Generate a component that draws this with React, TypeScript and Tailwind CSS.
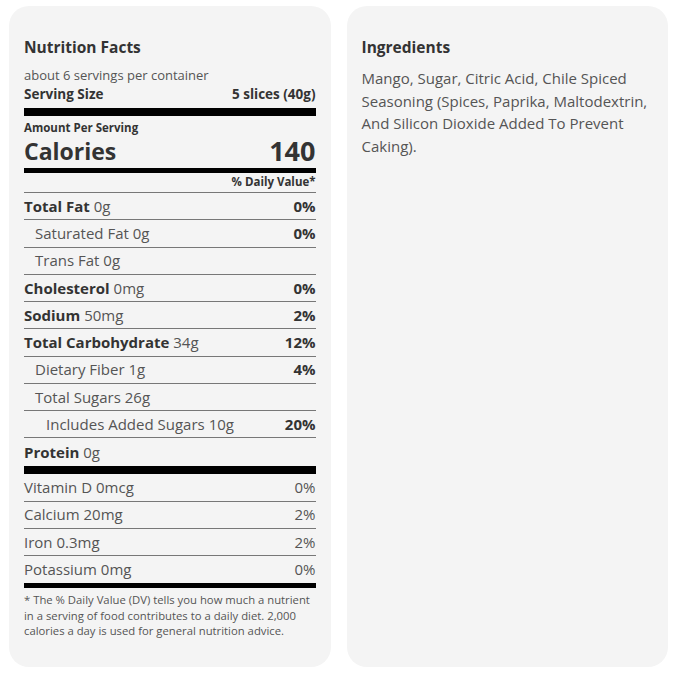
const rows = [
  { label: "Total Fat", value: "0g", dv: "0%", bold: true, indent: 0 },
  { label: "Saturated Fat", value: "0g", dv: "0%", bold: false, indent: 1 },
  { label: "Trans Fat", value: "0g", dv: "", bold: false, indent: 1 },
  { label: "Cholesterol", value: "0mg", dv: "0%", bold: true, indent: 0 },
  { label: "Sodium", value: "50mg", dv: "2%", bold: true, indent: 0 },
  { label: "Total Carbohydrate", value: "34g", dv: "12%", bold: true, indent: 0 },
  { label: "Dietary Fiber", value: "1g", dv: "4%", bold: false, indent: 1 },
  { label: "Total Sugars", value: "26g", dv: "", bold: false, indent: 1 },
  { label: "Includes Added Sugars", value: "10g", dv: "20%", bold: false, indent: 2 },
];

const vitamins = [
  { label: "Vitamin D", value: "0mcg", dv: "0%" },
  { label: "Calcium", value: "20mg", dv: "2%" },
  { label: "Iron", value: "0.3mg", dv: "2%" },
  { label: "Potassium", value: "0mg", dv: "0%" },
];

const indents = ["pl-0", "pl-[11px]", "pl-[22px]"];

export default function App() {
  return (
    <div
      className="flex gap-4 bg-white pl-[9px] pr-[11px] pt-[6px] pb-[7px] text-[#555]"
      style={{ fontFamily: '"Open Sans", "Liberation Sans", sans-serif' }}
    >
      {/* nutrition label */}
      <div className="w-[322px] rounded-[20px] bg-[#f4f4f4] px-[15px] pt-[31px] pb-[28px]">
        <h2 className="text-[15.5px] leading-[20px] font-bold text-[#333]">Nutrition Facts</h2>
        <p className="mt-[9px] text-[13px] leading-[19px]">about 6 servings per container</p>
        <div className="flex justify-between text-[13.5px] leading-[19px] font-bold text-[#333]">
          <span>Serving Size</span>
          <span>5 slices (40g)</span>
        </div>
        <div className="mt-[4px] h-[8px] bg-black"></div>
        <p className="mt-[5px] text-[11.5px] leading-[14px] font-bold text-[#333]">Amount Per Serving</p>
        <div className="mt-[2px] flex items-center justify-between h-[28px] font-bold text-[#333]">
          <span className="text-[23px]">Calories</span>
          <span className="text-[27px]">140</span>
        </div>
        <div className="mt-[3px] h-[5px] bg-black"></div>
        <p className="mt-[2px] text-right text-[11.5px] leading-[14px] font-bold text-[#333]">% Daily Value*</p>
        <div className="mt-[3px] border-t border-[#777]">
          {rows.map((r) => (
            <div
              key={r.label}
              className={`flex h-[27.25px] items-center justify-between border-b border-[#777] text-[15px] ${indents[r.indent]}`}
            >
              <span>
                {r.bold ? <span className="font-bold text-[#333]">{r.label}</span> : r.label} {r.value}
              </span>
              <span className="font-bold text-[#333]">{r.dv}</span>
            </div>
          ))}
          <div className="flex h-[28px] items-center text-[15px]">
            <span>
              <span className="font-bold text-[#333]">Protein</span> 0g
            </span>
          </div>
        </div>
        <div className="h-[8px] bg-black"></div>
        {vitamins.map((v, i) => (
          <div
            key={v.label}
            className={`flex h-[27.25px] items-center justify-between text-[15px] ${
              i < vitamins.length - 1 ? "border-b border-[#777]" : ""
            }`}
          >
            <span>
              {v.label} {v.value}
            </span>
            <span>{v.dv}</span>
          </div>
        ))}
        <div className="h-[5px] bg-black"></div>
        <p className="mt-[4px] text-[11.3px] leading-[15.5px]">
          * The % Daily Value (DV) tells you how much a nutrient in a serving of food contributes to a daily
          diet. 2,000 calories a day is used for general nutrition advice.
        </p>
      </div>

      {/* ingredients */}
      <div className="w-[322px] rounded-[20px] bg-[#f4f4f4] px-[15px] pt-[31px]">
        <h2 className="text-[15.5px] leading-[20px] font-bold text-[#333]">Ingredients</h2>
        <p className="mt-[10px] text-[15px] leading-[22.5px]">
          Mango, Sugar, Citric Acid, Chile Spiced Seasoning (Spices, Paprika, Maltodextrin, And Silicon Dioxide
          Added To Prevent Caking).
        </p>
      </div>
    </div>
  );
}
